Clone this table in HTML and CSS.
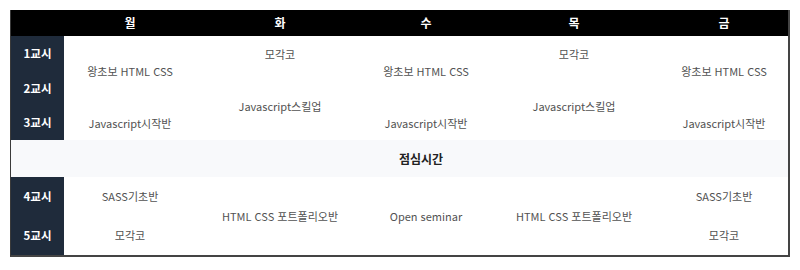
FILE: index.html
```html
<!DOCTYPE html>
<html lang="ko">
<head>
<meta charset="utf-8">
<link rel="stylesheet" href="styles.css">
</head>
<body>
<div class="wrap">
<table class="timetable">
  <colgroup>
    <col class="c-th"><col class="c-mon"><col class="c-tue"><col class="c-wed"><col class="c-thu"><col class="c-fri">
  </colgroup>
  <thead>
    <tr class="r-head">
      <th></th><th>월</th><th>화</th><th>수</th><th>목</th><th>금</th>
    </tr>
  </thead>
  <tbody>
    <tr class="r1">
      <th class="period">1교시</th>
      <td rowspan="2">왕초보 HTML CSS</td>
      <td>모각코</td>
      <td rowspan="2">왕초보 HTML CSS</td>
      <td>모각코</td>
      <td rowspan="2">왕초보 HTML CSS</td>
    </tr>
    <tr class="r2">
      <th class="period">2교시</th>
      <td rowspan="2">Javascript스킬업</td>
      <td rowspan="2">Javascript스킬업</td>
    </tr>
    <tr class="r3">
      <th class="period">3교시</th>
      <td>Javascript시작반</td>
      <td>Javascript시작반</td>
      <td>Javascript시작반</td>
    </tr>
    <tr class="r-lunch">
      <th class="lunch-th"></th>
      <td colspan="5" class="lunch">점심시간</td>
    </tr>
    <tr class="r4">
      <th class="period">4교시</th>
      <td>SASS기초반</td>
      <td rowspan="2">HTML CSS 포트폴리오반</td>
      <td rowspan="2">Open seminar</td>
      <td rowspan="2">HTML CSS 포트폴리오반</td>
      <td>SASS기초반</td>
    </tr>
    <tr class="r5">
      <th class="period">5교시</th>
      <td>모각코</td>
      <td>모각코</td>
    </tr>
  </tbody>
</table>
</div>
</body>
</html>
```

FILE: styles.css
```css
html, body {
  margin: 0;
  padding: 0;
  background: #ffffff;
}

body {
  font-family: "Noto Sans CJK KR", "Noto Sans", sans-serif;
  padding: 10px 0 0 10px;
}

.wrap {
  width: 777px;
  border-left: 1px solid #3a3a3a;
  border-right: 2px solid #444444;
  border-bottom: 2px solid #444444;
}

.timetable {
  width: 777px;
  border-collapse: collapse;
  table-layout: fixed;
}

.c-th { width: 53px; }
.c-mon { width: 132px; }
.c-tue { width: 168px; }
.c-wed { width: 124px; }
.c-thu { width: 172px; }
.c-fri { width: 128px; }

.timetable th,
.timetable td {
  padding: 0;
  text-align: center;
  vertical-align: middle;
  line-height: 1;
  white-space: nowrap;
}

.r-head th {
  background: #000000;
  color: #ffffff;
  font-size: 12px;
  font-weight: 700;
  height: 26px;
}

.r1 { height: 36px; }
.r2 { height: 34px; }
.r3 { height: 34px; }
.r-lunch { height: 37px; }
.r4 { height: 39px; }
.r5 { height: 39px; }

.period {
  background: #1f2b3b;
  color: #ffffff;
  font-size: 11.5px;
  font-weight: 700;
}

.timetable td {
  color: #525252;
  font-size: 11px;
  font-weight: 400;
}

.lunch-th {
  background: #f8f9fb;
}

.timetable td.lunch {
  background: #f8f9fb;
  color: #222222;
  font-size: 12px;
  font-weight: 700;
  padding-right: 10px;
}
```
